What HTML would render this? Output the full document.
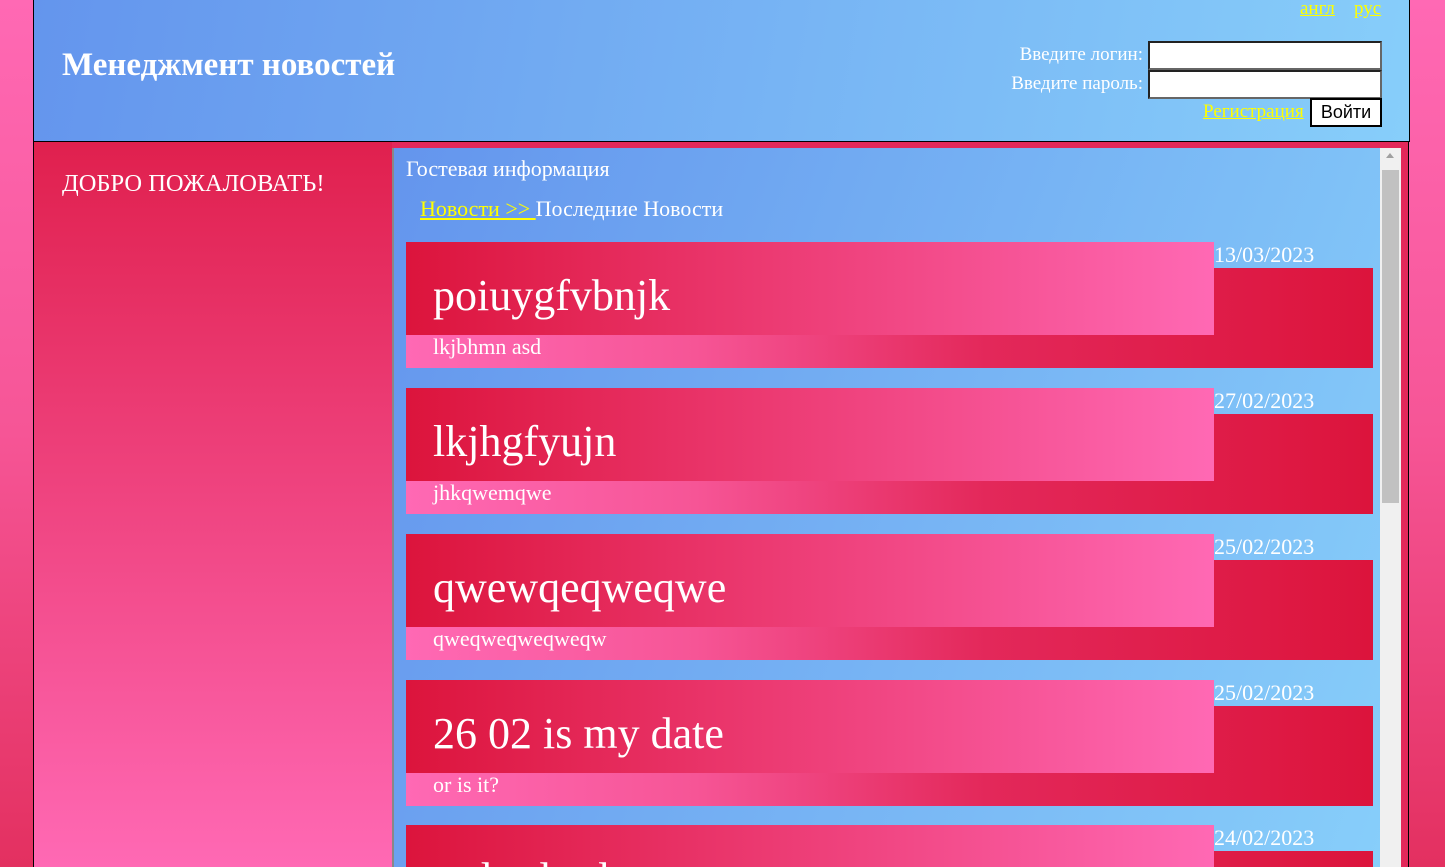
<!DOCTYPE html>
<html><head><meta charset="utf-8"><style>
*{margin:0;padding:0;box-sizing:border-box}
html,body{width:1445px;height:867px;overflow:hidden}
body{background:linear-gradient(180deg,#ff69b4 0%,#f65596 50%,#e33060 100%);font-family:"Liberation Serif",serif;color:#fff;position:relative}
#hdr{position:absolute;left:33px;top:0;width:1377px;height:142px;border:1px solid #000;border-top:none;background:linear-gradient(100deg,#6495ed 0%,#87cefa 100%)}
#hdr h1{position:absolute;left:28px;top:47px;font-size:33px;font-weight:bold}
a{color:#ffff00;text-decoration:underline}
.lang{position:absolute;top:-2px;font-size:19px}
.lbl{position:absolute;right:266px;font-size:19px}
.inp{position:absolute;left:1114px;width:234px;height:29px;background:#fff;border:2px solid;border-color:#222 #666 #666 #222}
#btn{position:absolute;left:1276px;top:98px;width:72px;height:29px;background:#fff;border:2px solid #000;color:#000;font-family:"Liberation Sans",sans-serif;font-size:18px;text-align:center;line-height:25px}
#left{position:absolute;left:33px;top:142px;width:360px;height:725px;border-left:1px solid #000;background:linear-gradient(180deg,#e0204e 0%,#ff69b4 100%)}
#left div{position:absolute;left:28px;top:28px;font-size:24.5px}
#mid{position:absolute;left:392px;top:142px;width:1017px;height:725px;border-right:1px solid #000;background:#e3285a}
#panel{position:absolute;left:392px;top:148px;width:988px;height:719px;border-left:2px solid #888;background:linear-gradient(110deg,#6495ed 0%,#87cefa 100%)}
#sb{position:absolute;left:1380px;top:148px;width:21px;height:719px;background:#f0f0f0}
#thumb{position:absolute;left:1382px;top:170px;width:17px;height:333px;background:#c1c1c1}
.card{position:absolute;left:406px;width:967px;height:126px;overflow:hidden}
.card .b{position:absolute;left:0;top:26px;width:967px;height:100px;background:linear-gradient(90deg,#ff69b4 0%,#f65596 30%,#e3285a 60%,#dc143c 100%)}
.card .t{position:absolute;left:0;top:0;width:808px;height:93px;background:linear-gradient(90deg,#dc143c 0%,#ff69b4 100%);font-size:44px;padding-left:27px;padding-top:30px;line-height:48px}
.card .d{position:absolute;left:808px;top:0;font-size:22px;line-height:26px}
.card .s{position:absolute;left:27px;top:93px;font-size:22px;line-height:24px}
</style></head><body>
<div id="hdr">
<h1>Менеджмент новостей</h1>
<a class="lang" style="left:1266px">англ </a><a class="lang" style="left:1320px">рус</a>
<div class="lbl" style="top:44px">Введите логин:</div>
<div class="lbl" style="top:73px">Введите пароль:</div>
<div class="inp" style="top:41px"></div>
<div class="inp" style="top:70px"></div>
<a style="position:absolute;left:1169px;top:101px;font-size:19px">Регистрация</a>
<div id="btn">Войти</div>
</div>
<div id="left"><div>ДОБРО ПОЖАЛОВАТЬ!</div></div>
<div id="mid"></div>
<div id="panel">
<div style="position:absolute;left:12px;top:8px;font-size:22px">Гостевая информация</div>
<div style="position:absolute;left:26px;top:48px;font-size:22px"><a>Новости &gt;&gt; </a>Последние Новости</div>
</div>
<div class="card" style="top:242px"><div class="b"></div><div class="t">poiuygfvbnjk</div><div class="d">13/03/2023</div><div class="s">lkjbhmn asd</div></div>
<div class="card" style="top:388px"><div class="b"></div><div class="t">lkjhgfyujn</div><div class="d">27/02/2023</div><div class="s">jhkqwemqwe</div></div>
<div class="card" style="top:534px"><div class="b"></div><div class="t">qwewqeqweqwe</div><div class="d">25/02/2023</div><div class="s">qweqweqweqweqw</div></div>
<div class="card" style="top:680px"><div class="b"></div><div class="t">26 02 is my date</div><div class="d">25/02/2023</div><div class="s">or is it?</div></div>
<div class="card" style="top:825px;height:42px"><div class="b"></div><div class="t">asdasdasd</div><div class="d">24/02/2023</div></div>
<div id="sb"></div><div id="thumb"></div>
<div style="position:absolute;left:1386px;top:153px;width:0;height:0;border-left:4px solid transparent;border-right:4px solid transparent;border-bottom:5px solid #a0a0a0"></div>
</body></html>
